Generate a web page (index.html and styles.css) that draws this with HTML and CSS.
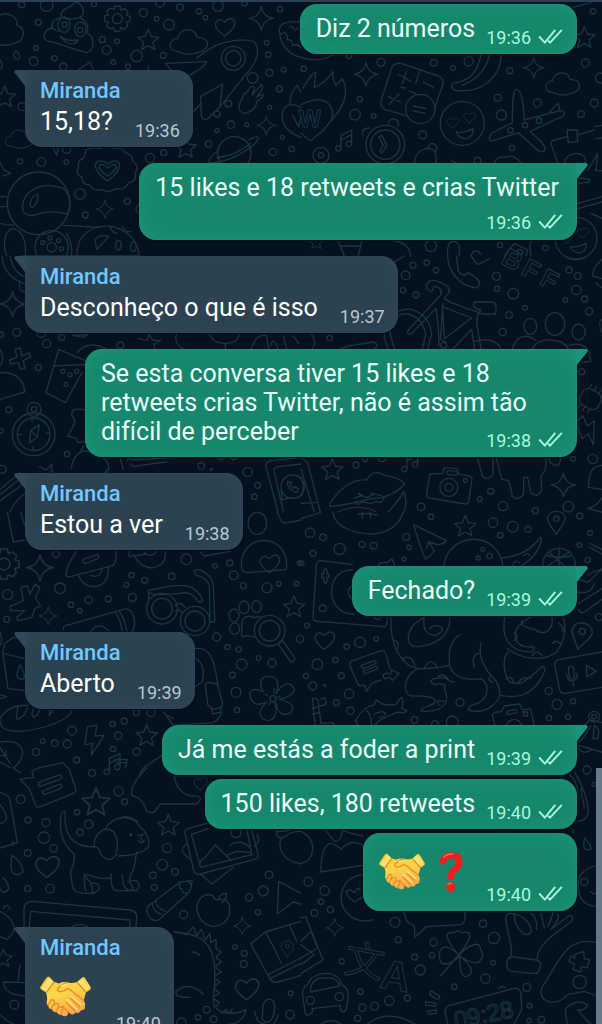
FILE: index.html
```html
<!DOCTYPE html>
<html lang="pt">
<head>
<meta charset="utf-8">
<meta name="viewport" content="width=device-width, initial-scale=1">
<title>Conversa</title>
<link rel="stylesheet" href="styles.css">
</head>
<body>
<svg class="wallpaper" viewBox="0 0 1806 3072" preserveAspectRatio="xMinYMin slice" aria-hidden="true">
  <defs>
    <path id="star" d="M0-32 9-10 32-7 14 8 20 30 0 18-20 30-14 8-32-7-9-10Z"/>
    <path id="spark" d="M0-36Q4-5 36 0Q5 5 0 36Q-5 5-36 0Q-5-5 0-36Z"/>
    <path id="heart" d="M-2 28Q-34 5-29-10Q-22-30-2-14Q16-34 28-16Q34 2-2 28Z"/>
    <path id="cloud" d="M-34 30C-70 28-56-10-34-8C-25-45 22-42 25-12C65-14 64 25 36 30Q0 48-34 30Z"/>
    <path id="note" d="M-18 22V-18L14-34V8M-18-4 14-20M-18 22a8 8 0 1 1-2-6M14 8a8 8 0 1 1-2-6"/>
    <path id="pin" d="M0 34C-14 8-30-2-26-18C-20-42 20-42 26-18C29-2 12 10 0 34ZM8-14a8 8 0 1 1-16 0a8 8 0 1 1 16 0"/>
    <path id="bolt" d="M-20-42 8-46 4-14 30-16-8 44-4 8-28 12Z"/>
    <g id="gear"><path d="M-8-38H8L11-26 22-30 32-20 27-10 38-7V8L27 11 31 22 21 32 10 27 7 38H-8L-11 27-22 31-32 21-27 10-38 7V-8L-27-11-31-22-21-32-10-27Z"/><circle r="15"/></g>
    <g id="love"><circle r="66"/><use href="#heart" transform="translate(-28 -2) scale(.6)"/><use href="#heart" transform="translate(22 -18) scale(.6)"/><path d="M-18 26Q8 30 32 16Q34 44 8 46Q-12 44-18 26Z"/></g>
    <g id="camera"><path d="M-60-32-22-36-18-54H22L26-38 62-34Q68-32 67-22L62 42Q60 52 48 50L-56 40Q-66 38-65 28Z"/><circle r="27" cy="4"/><circle r="12" cy="4"/><rect x="-10" y="-46" width="32" height="12" rx="5"/><circle cx="48" cy="-20" r="6"/></g>
  </defs>

  <g>
    <path d="M0 45C30 35 55 55 50 75C80 85 72 120 50 128Q25 138 0 135M0 180Q12 195 2 208"/>
    <path d="M185 52C175 25 215 25 228 4C255 20 255 42 240 52Q270 70 262 98C290 120 280 150 262 158C220 150 180 130 150 125C120 120 130 90 156 84Q150 60 185 52ZM185 52Q210 62 240 52M156 84Q168 92 178 94M180 108Q200 126 234 120Q225 140 196 126Z"/>
    <ellipse cx="192" cy="74" rx="18" ry="23"/><ellipse cx="241" cy="88" rx="17" ry="22"/><circle cx="194" cy="74" r="8"/><circle cx="240" cy="90" r="8"/>
    <use href="#gear" x="352" y="56"/><use href="#star" x="445" y="119"/>
    <use href="#cloud" x="566" y="124"/><use href="#heart" x="676" y="80"/><use href="#spark" x="784" y="55"/>
    <path d="M496 190 620 185Q612 205 540 240M496 190 515 212M590 175C640 130 710 110 760 124C785 145 770 190 740 220L660 320M602 290 668 252 660 320 624 356Q606 364 604 344ZM580 335 604 310"/>
    <circle cx="700" cy="175" r="36"/><circle cx="700" cy="175" r="23"/>
    <path d="M903 66C860 62 836 70 838 95C842 140 870 165 903 172M838 95Q846 110 852 96Q864 102 862 120Q878 116 878 136Q894 130 903 144M870 78 882 86M886 92 894 82"/>
    <path d="M48 152Q64 168 58 176Q44 180 40 164ZM232 212 270 186 282 212M445 200V212"/>
    <path d="M738 340Q710 336 720 308C735 290 725 280 742 276Q754 250 764 264L756 286 784 254Q796 262 768 292L788 282Q796 290 770 304Q770 328 738 340Z"/>
    <use href="#spark" transform="translate(799 376) scale(.8)"/><use href="#star" x="14" y="290"/>
    <path d="M903 322C870 305 848 315 846 350C848 380 870 400 903 412M878 346 896 380 903 350M870 310Q868 280 892 256L903 276"/>
    <use href="#cloud" transform="translate(58 416) scale(.75)"/><path d="M158 440 170 466 176 440"/>
    <circle cx="703" cy="460" r="50"/><path d="M655 452C620 478 620 492 638 488Q690 486 755 440C785 412 778 402 745 420M650 474Q710 466 752 430"/>
    <use href="#star" x="557" y="442"/>
    <path d="M258 450Q280 440 300 446Q320 432 342 446Q366 440 376 458Q400 464 398 484Q420 500 406 518Q412 545 386 548Q375 572 348 566Q325 582 306 568Q280 576 270 555Q245 554 246 532Q222 520 236 502Q230 480 252 474ZM323 543C260 500 290 465 323 492C358 465 380 500 323 543ZM323 528C278 500 302 480 323 504C346 480 366 500 323 528Z"/>
    <circle cx="116" cy="610" r="94"/><path d="M190 565Q130 545 90 575Q60 600 70 635Q85 655 120 640Q155 630 202 642Q222 600 190 565ZM112 582C92 590 84 620 96 622C110 618 118 590 112 582Z"/>
    <path d="M0 486 12 510 32 520 6 528M0 590H20M0 620H24M36 685C8 700 10 740 20 768M36 685Q80 690 76 768M40 675Q20 676 0 670M190 676 300 682M60 768H420M200 700Q220 740 214 768"/>
    <circle cx="155" cy="742" r="50"/><circle cx="155" cy="742" r="14"/><circle cx="128" cy="728" r="6"/><circle cx="150" cy="714" r="6"/><circle cx="176" cy="722" r="6"/><circle cx="184" cy="746" r="6"/>
    <use href="#spark" transform="translate(315 628) scale(.75)"/>
    <path d="M230 768C230 700 280 672 340 680Q410 700 418 768M285 720Q300 700 326 710L290 748ZM330 680Q335 700 352 700M366 680Q380 700 392 694"/><ellipse cx="355" cy="736" rx="8" ry="14"/><ellipse cx="400" cy="740" rx="8" ry="14"/>
    <circle cx="65" cy="14" r="9"/><circle cx="140" cy="15" r="19"/><circle cx="282" cy="12" r="8"/><circle cx="115" cy="67" r="9"/><circle cx="108" cy="144" r="7"/><circle cx="101" cy="184" r="13"/><circle cx="163" cy="175" r="8"/><circle cx="190" cy="200" r="11"/><circle cx="307" cy="119" r="9"/><circle cx="351" cy="124" r="7"/><circle cx="320" cy="150" r="13"/><circle cx="340" cy="187" r="7"/><circle cx="430" cy="38" r="12"/><circle cx="480" cy="8" r="13"/><circle cx="470" cy="56" r="7"/><circle cx="507" cy="74" r="16"/><circle cx="540" cy="22" r="10"/><circle cx="597" cy="34" r="8"/><circle cx="616" cy="53" r="7"/><circle cx="654" cy="18" r="16"/><circle cx="734" cy="10" r="8"/><circle cx="840" cy="28" r="8"/><circle cx="410" cy="168" r="17"/><circle cx="490" cy="166" r="9"/><circle cx="384" cy="200" r="8"/><circle cx="800" cy="128" r="7"/><circle cx="805" cy="164" r="8"/><circle cx="758" cy="234" r="16"/><circle cx="808" cy="218" r="10"/><circle cx="851" cy="209" r="7"/><circle cx="838" cy="267" r="9"/><circle cx="685" cy="311" r="10"/><circle cx="651" cy="342" r="9"/><circle cx="693" cy="374" r="11"/><circle cx="740" cy="374" r="6"/><circle cx="809" cy="322" r="6"/><circle cx="651" cy="392" r="6"/><circle cx="626" cy="432" r="10"/><circle cx="847" cy="412" r="6"/><circle cx="819" cy="456" r="11"/><circle cx="875" cy="447" r="8"/><circle cx="450" cy="474" r="14"/><circle cx="491" cy="458" r="9"/><circle cx="200" cy="448" r="12"/><circle cx="124" cy="486" r="13"/><circle cx="60" cy="484" r="8"/><circle cx="199" cy="486" r="7"/><circle cx="240" cy="582" r="16"/><circle cx="382" cy="604" r="9"/><circle cx="420" cy="627" r="12"/><circle cx="256" cy="645" r="9"/><circle cx="66" cy="320" r="12"/><circle cx="432" cy="546" r="8"/><circle cx="434" cy="684" r="10"/>
  </g>

  <g transform="translate(903 0)">
    <path d="M0 172Q50 190 95 165M815 22 870 8"/>
    <use href="#spark" x="195" y="223"/><use href="#star" x="850" y="112"/><use href="#spark" transform="translate(698 203) scale(.85)"/>
    <path d="M6 265C20 235 42 215 44 216L40 262Q70 252 96 214Q94 238 104 256L124 236C145 275 130 320 92 360L66 392 28 422 0 400M0 314C40 295 80 290 94 330Q96 345 92 360"/>
    <text x="-6" y="382" font-size="70" font-weight="700">W</text>
    <path d="M274 198Q284 188 300 190L412 228Q430 236 426 252L400 326M274 198 240 302Q236 320 252 328L312 346M290 222 330 244M316 214 304 252M366 246 398 262M356 212 344 250M262 290 298 306M294 282 264 314M300 262 312 264M328 274 344 280"/><circle cx="358" cy="327" r="44"/><path d="M338 318 376 326M336 332 372 340"/>
    <path d="M540 164C530 220 500 246 456 250Q446 262 460 270C540 285 600 230 600 164M566 164Q550 230 484 256"/>
    <use href="#cloud" transform="translate(785 250) scale(.9)"/>
    <path d="M670 360C668 300 660 270 646 268C636 270 634 300 634 368L572 400Q560 415 570 424L652 398 700 442Q722 464 732 450C736 430 700 410 688 394L786 348Q796 334 778 332L670 360M744 338 770 310Q778 318 772 332"/><circle cx="628" cy="391" r="8"/><circle cx="672" cy="376" r="8"/><circle cx="714" cy="362" r="8"/>
    <use href="#love" x="484" y="370"/><use href="#note" x="138" y="424"/>
    <circle cx="253" cy="434" r="58"/><circle cx="253" cy="434" r="44"/><path d="M234 410 242 406 258 436 242 460 236 454 246 436ZM186 408Q178 384 206 384M262 372Q262 354 282 358Q298 366 290 380"/>
    <path d="M340 490Q340 465 362 450C400 435 410 460 404 490M378 446 390 430Q404 430 408 442L402 460"/>
    <circle cx="60" cy="466" r="24"/><circle cx="60" cy="466" r="8"/>
    <path d="M770 488 750 432Q750 422 760 420L798 410M832 404 880 390M798 390H828L830 424 802 428ZM880 380 903 376M884 416 903 414M580 490Q586 468 610 472Q640 460 660 490M834 534 866 538V546L834 550M830 610 903 590M830 626 903 606M790 490Q796 460 830 460Q860 468 852 490M862 510 890 460 884 512H903"/>
    <path d="M450 480 468 490"/><use href="#love" transform="translate(825 715) scale(.95)"/>
    <path d="M690 768Q680 720 700 718M870 640 903 655M112 724 130 768M182 724 172 768M118 738H180M270 720Q330 730 328 768M440 768Q436 720 462 724Q480 730 474 768M510 768Q520 740 540 762M610 768 640 730 680 750 676 768"/><use href="#star" transform="translate(46 725) scale(.7)"/>
    <circle cx="240" cy="187" r="12"/><circle cx="144" cy="168" r="8"/><circle cx="8" cy="206" r="8"/><circle cx="398" cy="188" r="10"/><circle cx="456" cy="204" r="7"/><circle cx="503" cy="184" r="14"/><circle cx="626" cy="212" r="9"/><circle cx="176" cy="298" r="8"/><circle cx="162" cy="344" r="16"/><circle cx="218" cy="348" r="7"/><circle cx="365" cy="405" r="12"/><circle cx="590" cy="293" r="10"/><circle cx="601" cy="345" r="15"/><circle cx="709" cy="309" r="12"/><circle cx="853" cy="189" r="12"/><circle cx="898" cy="234" r="15"/><circle cx="880" cy="309" r="12"/><circle cx="840" cy="342" r="10"/><circle cx="633" cy="444" r="8"/><circle cx="530" cy="482" r="10"/><circle cx="876" cy="34" r="8"/><circle cx="390" cy="738" r="17"/><circle cx="597" cy="735" r="8"/><circle cx="733" cy="744" r="8"/><circle cx="657" cy="756" r="8"/>
  </g>

  <g transform="translate(0 768)">
    <path d="M6 0Q10 60 74 84M30 0Q40 50 74 62M60 74Q52 110 80 108"/><use href="#spark" transform="translate(38 144) scale(1.05)"/>
    <path d="M46 280 60 276 66 300 88 290 92 302 70 314 74 338 62 340 56 320 32 324 28 312 50 304ZM176 280 138 410 196 440 246 350M176 280 256 314M162 330 256 326M232 290Q262 250 320 280M0 350C50 345 74 380 74 408L0 430M0 280Q16 310 0 330"/>
    <circle cx="189" cy="346" r="6"/><circle cx="210" cy="356" r="6"/><circle cx="230" cy="346" r="6"/><circle cx="198" cy="385" r="6"/>
    <circle cx="101" cy="535" r="64"/><circle cx="101" cy="535" r="49"/><circle cx="102" cy="460" r="21"/><circle cx="102" cy="460" r="8"/><path d="M92 524 118 506 112 542 88 562ZM92 524 112 542M96 488V498M100 570V582M54 536H64M138 532 148 530"/>
    <path d="M256 462Q210 452 216 478L226 498 204 540 230 548 234 560 258 556M214 636C220 600 240 580 262 586M262 586Q330 600 326 640Q310 650 320 650M240 592 250 570M360 604 370 640M392 612 530 604M392 624Q396 636 420 628L500 618M388 604 382 615"/>
    <path d="M530 232Q520 264 550 278M600 232Q640 230 720 232M626 232Q640 264 676 262Q710 264 718 236M676 262V278M754 278Q770 230 800 240L806 278M812 268Q820 238 834 278M850 240 860 278M880 240 896 262M416 248 442 254 446 236 458 252 482 254 462 264 464 278"/>
    <path d="M118 632 138 642 156 624 154 642 160 650M650 604 664 612 682 600 700 612 714 604"/>
    <path d="M0 700 60 650M0 716 66 664M0 734 70 684M30 768Q50 726 74 714"/>
    <path d="M800 640Q790 620 812 614L903 604M800 640 834 768M824 652Q816 636 834 632L903 624M824 652 850 768"/><circle cx="878" cy="692" r="35"/><path d="M844 702 846 732 870 724M862 676Q860 700 890 710L896 698 884 692 880 698 870 686 876 680Z"/>
    <circle cx="50" cy="229" r="12"/><circle cx="2" cy="236" r="8"/><circle cx="140" cy="263" r="12"/><circle cx="185" cy="244" r="9"/><circle cx="124" cy="230" r="14"/><circle cx="115" cy="335" r="9"/><circle cx="361" cy="268" r="10"/><circle cx="26" cy="461" r="9"/><circle cx="2" cy="524" r="7"/><circle cx="201" cy="594" r="8"/><circle cx="6" cy="640" r="12"/><circle cx="604" cy="630" r="10"/><circle cx="634" cy="640" r="3"/><circle cx="743" cy="648" r="14"/><circle cx="773" cy="688" r="9"/><circle cx="763" cy="722" r="8"/><path d="M218 238 262 236 250 244Z"/>
  </g>

  <g transform="translate(903 768)">
    <path d="M440 0C440 50 480 90 524 96Q546 84 526 66L502 50Q490 66 472 46L466 0M510 0 530 26 566 8M275 20 310 0"/>
    <g transform="rotate(28 620 20)"><text x="600" y="32" font-size="78" font-weight="700">B</text><text x="668" y="32" font-size="78" font-weight="700">F</text><text x="730" y="32" font-size="78" font-weight="700">F</text></g>
    <path d="M790 0Q820 20 850 4M903 10Q870 40 876 60L903 68M886 80Q890 90 903 94"/>
    <path d="M330 160C280 155 245 200 250 248L262 278M320 174C285 170 265 200 268 236L280 278M330 160Q385 175 392 235L380 278M320 174Q366 184 374 236L364 278M376 90Q382 66 410 76C430 86 450 90 444 110L430 128 450 140 540 172M376 90Q380 110 394 104Q396 86 412 94Q426 104 418 118L322 222Q316 234 328 236L404 158Q412 190 414 270M426 142 418 250 436 260M424 152 512 186 430 248ZM532 172 552 174 584 174Q590 138 572 138L520 138Q510 156 540 162L532 172Q524 190 530 220L540 278M456 278 512 220 520 278M520 256Q580 240 600 278"/><circle cx="428" cy="268" r="9"/>
    <ellipse cx="688" cy="211" rx="19" ry="24"/><ellipse cx="762" cy="204" rx="29" ry="34"/><ellipse cx="833" cy="228" rx="20" ry="24"/><path d="M634 278Q650 230 690 244L706 254M694 278Q710 250 750 252Q790 254 802 278M804 268Q850 256 866 290L868 316 846 318"/>
    <path d="M30 232Q50 260 34 278M120 278 140 270 220 258Q236 270 220 278M903 190Q890 200 903 230"/>
    <g transform="rotate(30 868 428)"><rect x="838" y="402" width="62" height="54" rx="20"/><path d="M850 402V390M866 402V388M882 402V390M850 456V468M866 456V470M882 456V468"/></g>
    <use href="#bolt" transform="translate(862 524) rotate(-30)"/>
    <use href="#star" x="94" y="640"/><use href="#note" x="336" y="618"/><use href="#camera" transform="translate(444 690) rotate(4)"/>
    <path d="M0 604 20 620 58 768M0 640 40 768M0 664Q14 690 0 720M0 742 44 740"/>
    <path d="M86 744C120 690 160 670 196 672Q220 636 250 658Q300 665 310 684C290 710 250 728 208 728Q150 745 86 752ZM160 726 180 720 172 712 190 722 200 724 220 714 212 712 240 718M162 736 170 746 186 738 210 742 226 736 240 740 250 724M110 768Q160 745 210 760L226 768M260 768Q290 740 308 706Q320 730 310 768"/>
    <path d="M530 606 544 660Q560 676 576 656V606M586 606 602 670 624 674 634 720Q650 738 668 714V664L680 664 690 710Q710 728 722 702L720 658Q740 640 734 606"/><path d="M744 606Q744 628 770 628Q780 620 778 604"/>
    <use href="#spark" x="787" y="687"/><path d="M903 628C870 630 864 650 862 694L903 700M903 724Q890 750 860 758L903 768"/><circle cx="875" cy="609" r="14"/>
    <circle cx="336" cy="28" r="9"/><circle cx="377" cy="20" r="8"/><circle cx="314" cy="58" r="13"/><circle cx="405" cy="43" r="8"/><circle cx="306" cy="103" r="8"/><circle cx="345" cy="117" r="9"/><circle cx="586" cy="61" r="12"/><circle cx="588" cy="98" r="8"/><circle cx="637" cy="113" r="16"/><circle cx="672" cy="155" r="7"/><circle cx="624" cy="177" r="10"/><circle cx="605" cy="228" r="11"/><circle cx="804" cy="42" r="9"/><circle cx="830" cy="60" r="10"/><circle cx="826" cy="102" r="14"/><circle cx="793" cy="132" r="7"/><circle cx="851" cy="129" r="9"/><circle cx="864" cy="166" r="11"/><circle cx="86" cy="246" r="8"/><circle cx="842" cy="347" r="9"/><circle cx="165" cy="627" r="9"/><circle cx="192" cy="608" r="8"/><circle cx="243" cy="606" r="11"/><circle cx="816" cy="608" r="7"/><circle cx="569" cy="706" r="9"/><circle cx="536" cy="729" r="7"/><circle cx="606" cy="750" r="14"/><circle cx="360" cy="752" r="11"/><circle cx="802" cy="752" r="16"/><circle cx="703" cy="764" r="9"/>
  </g>

  <g transform="translate(0 1536)">
    <path d="M22 0 40 90 74 84M62 0 74 40"/><use href="#gear" transform="translate(12 156) scale(1.2)"/><use href="#spark" transform="translate(120 167) scale(1.1)"/>
    <path d="M62 226 82 222 90 246 104 218 120 226 106 258 122 282 104 290 96 316 54 326 50 316 74 296 32 296 30 284 70 266Z"/><use href="#spark" transform="translate(145 312) scale(.75)"/>
    <path d="M228 118Q200 160 198 190Q200 196 212 194L340 160Q352 140 348 118M250 142 292 128Q300 132 294 140L258 154Q248 152 250 142ZM236 192Q250 225 285 224Q325 220 325 166M270 190Q300 200 306 172M386 118 388 134 440 126M400 128Q420 166 456 168Q500 160 496 118M432 118Q450 142 470 118M600 118 612 132 690 118"/>
    <path d="M190 354Q188 342 200 340L370 292Q396 286 402 320Q408 345 396 358M346 302Q362 320 366 356M358 298Q374 320 380 356M272 358Q296 326 326 356M0 360 6 384 0 400M12 396 40 376 74 380M14 400 8 420 24 530 74 536M10 424 74 440M60 458Q78 490 72 500Q52 506 50 488Z"/>
    <circle cx="486" cy="290" r="46"/><circle cx="486" cy="290" r="31"/><circle cx="585" cy="327" r="44"/><circle cx="585" cy="327" r="30"/><path d="M526 280Q540 266 556 286M526 298Q538 286 546 302M446 242Q440 232 452 234Q530 215 570 224Q600 240 608 266Q600 276 590 262Q570 236 540 244L466 248ZM446 242V262M590 190Q576 176 590 172Q632 180 640 220L644 330 630 330 628 220Q620 196 590 190"/>
    <ellipse cx="772" cy="34" rx="28" ry="33"/><path d="M724 160C724 60 860 60 860 160Q862 176 846 174L742 182Q724 180 724 160Z"/><use href="#heart" x="810" y="154"/><path d="M830 0 844 26Q850 36 864 32L903 24"/>
    <path d="M740 370Q720 384 726 350C722 320 736 306 760 316L782 314M740 370 768 376"/><ellipse cx="702" cy="310" rx="15" ry="19"/><ellipse cx="732" cy="286" rx="15" ry="19"/><ellipse cx="770" cy="284" rx="14" ry="18"/><ellipse cx="704" cy="350" rx="15" ry="17"/><circle cx="809" cy="356" r="46"/><circle cx="809" cy="356" r="31"/><path d="M836 398 846 384 882 434Q886 450 872 450Z"/>
    <use href="#star" x="882" y="284"/>
    <path d="M586 410C640 400 645 470 654 520M586 438Q620 460 606 510L586 524M616 522Q614 510 630 512L652 516 668 576Q664 590 640 592L624 580ZM634 590 638 606 662 600 664 588M490 600 520 640 640 632Q660 620 664 600"/>
    <path d="M790 540C770 500 790 490 816 494C840 500 834 530 828 546C850 506 874 512 882 530C886 550 850 560 838 562C880 570 886 590 870 604C840 616 832 590 826 578C834 620 810 630 796 624C770 610 780 590 800 570C760 590 748 560 750 540Q760 525 790 540Z"/><circle cx="819" cy="560" r="9"/><path d="M794 546 804 552M822 528V544M840 554 832 556M806 578 812 570M832 580 824 572"/>
    <path d="M0 618Q30 576 86 580M54 584Q46 620 52 622Q80 610 82 586M100 590Q92 614 102 616Q118 604 118 594M0 620Q-4 660 60 658C140 652 210 620 216 596M150 592 148 610 160 594"/>
    <use href="#bolt" x="282" y="686"/><use href="#star" x="440" y="670"/><path d="M0 690Q60 680 68 720Q66 750 40 768M0 706 30 754M0 730 18 732V716M0 750 30 766M116 768 190 752 204 768M344 744 382 742 376 768M430 768 495 724M0 548 20 554 0 560M520 620 500 610M350 752H376"/>
    <circle cx="168" cy="125" r="10"/><circle cx="559" cy="142" r="16"/><circle cx="23" cy="248" r="15"/><circle cx="20" cy="322" r="9"/><circle cx="180" cy="229" r="16"/><circle cx="213" cy="278" r="8"/><circle cx="239" cy="296" r="7"/><circle cx="266" cy="264" r="11"/><circle cx="325" cy="261" r="9"/><circle cx="394" cy="189" r="8"/><circle cx="379" cy="218" r="7"/><circle cx="434" cy="205" r="9"/><circle cx="397" cy="256" r="12"/><circle cx="515" cy="193" r="10"/><circle cx="645" cy="162" r="7"/><circle cx="689" cy="153" r="9"/><circle cx="701" cy="190" r="13"/><circle cx="730" cy="221" r="9"/><circle cx="801" cy="227" r="15"/><circle cx="836" cy="215" r="7"/><circle cx="889" cy="215" r="7"/><circle cx="899" cy="153" r="7"/><circle cx="650" cy="375" r="12"/><circle cx="682" cy="405" r="8"/><circle cx="716" cy="412" r="8"/><circle cx="725" cy="457" r="16"/><circle cx="776" cy="438" r="7"/><circle cx="816" cy="453" r="12"/><circle cx="697" cy="489" r="9"/><circle cx="708" cy="541" r="15"/><circle cx="711" cy="594" r="8"/><circle cx="900" cy="381" r="11"/><circle cx="216" cy="656" r="13"/><circle cx="128" cy="687" r="7"/><circle cx="164" cy="694" r="10"/><circle cx="202" cy="696" r="12"/><circle cx="108" cy="720" r="11"/><circle cx="230" cy="744" r="9"/><circle cx="338" cy="636" r="8"/><circle cx="373" cy="627" r="9"/><circle cx="355" cy="671" r="11"/><circle cx="339" cy="711" r="8"/><circle cx="410" cy="719" r="11"/><circle cx="409" cy="602" r="9"/><circle cx="453" cy="602" r="12"/>
  </g>

  <g transform="translate(903 1536)">
    <path d="M96 0C100 50 170 66 220 66C270 60 300 30 306 0M184 0V18M206 0 210 18M170 8Q196 0 230 10M0 20 40 8 60 0"/>
    <path d="M338 38 436 86Q430 96 410 98L382 90 400 116Q390 130 374 142Q362 120 338 38ZM382 90 376 110"/><use href="#star" x="493" y="42"/><use href="#pin" x="766" y="34"/>
    <path d="M428 162C440 60 590 50 606 162M604 138Q680 130 716 78Q722 74 720 90C710 130 680 150 660 162M636 160Q640 140 656 152M668 130Q684 120 686 132"/><circle cx="545" cy="112" r="6"/><circle cx="532" cy="138" r="6"/><circle cx="566" cy="132" r="8"/>
    <circle cx="774" cy="158" r="49"/><path d="M736 130Q770 140 810 132M774 108V162M740 162 808 118M744 120 790 162"/>
    <path d="M866 94 903 112M866 106 903 126M830 200 860 212 903 170M832 292Q840 306 850 300L903 262M830 276 903 230M860 190Q890 170 903 176M830 240Q870 250 880 214"/>
    <path d="M154 158 60 146Q48 146 46 160L36 314Q36 328 50 328L250 344Q262 340 258 312M154 174C70 170 70 310 160 306M154 220Q130 240 154 262M68 174Q72 166 78 174V186H84V196H78V208Q72 220 68 208V196H62V186H68ZM232 160 238 152 258 152 272 140 278 152 280 162"/><circle cx="65" cy="289" r="10"/><circle cx="230" cy="312" r="10"/>
    <use href="#heart" x="72" y="384"/>
    <path d="M270 312C265 400 300 460 350 470Q400 470 446 460C440 420 450 380 480 366M540 394C530 430 545 460 570 490Q600 520 596 550M370 316Q320 340 322 385C330 420 400 400 430 370Q450 340 446 312M370 312Q360 370 404 370Q430 360 422 346Q400 334 386 350M274 382Q296 386 290 410M306 440Q330 424 342 462M370 468Q390 430 410 468M446 460Q460 510 540 500C570 520 560 560 530 574Q500 580 502 594C560 610 590 570 596 550M350 470C310 490 300 540 330 552Q380 550 400 560Q410 575 380 582Q350 596 366 598C440 600 445 560 430 530Q440 510 400 518Q380 506 400 500L430 496Q450 512 460 510M414 580Q400 560 430 568M570 490Q555 505 575 510M520 466Q510 430 532 424M410 494Q430 480 444 506"/>
    <path d="M612 312C600 370 620 420 690 420Q710 405 690 404C640 410 630 360 656 340Q700 300 712 316M620 410C660 440 720 450 760 425C790 400 800 340 784 312M664 326Q650 340 700 352C740 380 760 340 752 314M772 334Q788 340 786 358M755 394Q764 380 780 398M694 432Q700 410 724 430M640 362Q660 376 638 386M622 420C600 440 610 500 630 512Q660 520 680 500L724 464Q740 466 720 500C690 550 650 560 600 550M616 502Q624 486 640 510M650 512Q670 490 690 500"/>
    <path d="M148 464Q142 448 156 446L240 416Q252 416 256 430L266 468M148 464 172 520 190 520 196 538 212 514 240 504M180 460 220 446Q230 448 222 456L186 470ZM186 478 226 462Q236 466 226 472L190 486ZM246 490Q250 480 268 486L272 474 294 484 274 506 268 496 250 500Z"/>
    <use href="#pin" transform="translate(840 374) rotate(14) scale(1.15)"/>
    <path d="M903 420 776 442Q758 446 762 464L776 534Q780 546 794 544L903 526M856 460 886 478 858 494ZM802 470Q806 456 818 468L820 496Q810 506 804 494ZM796 486Q800 510 816 506Q832 500 828 484M816 508 818 522"/>
    <path d="M164 624Q190 580 218 580L226 564 244 576C260 580 270 580 284 578L300 556Q310 560 302 590L318 596Q310 606 290 600L240 622 220 640M164 624 170 640M196 596Q210 604 212 640M220 606Q240 596 254 602Q250 616 232 616M34 560Q52 556 52 574L60 634 96 632 100 640M34 560 42 636M34 590 52 584M34 606 56 602M60 562Q76 550 74 578L56 582"/>
    <path d="M582 640 574 610Q576 598 600 600L610 582 656 576 664 594 688 590 700 640M614 640Q640 604 664 640M618 598 646 592 648 602 620 608ZM666 600H680V612H668ZM850 640 866 624 903 632M832 690Q850 680 870 640M880 640Q900 650 890 680H876ZM832 708Q850 730 870 714M832 700 903 720"/><circle cx="879" cy="614" r="16"/><circle cx="879" cy="614" r="7"/>
    <circle cx="27" cy="62" r="14"/><circle cx="66" cy="76" r="10"/><circle cx="116" cy="111" r="17"/><circle cx="183" cy="97" r="9"/><circle cx="218" cy="101" r="10"/><circle cx="36" cy="124" r="9"/><circle cx="2" cy="154" r="7"/><circle cx="316" cy="75" r="10"/><circle cx="324" cy="106" r="7"/><circle cx="309" cy="141" r="6"/><circle cx="390" cy="14" r="8"/><circle cx="576" cy="32" r="14"/><circle cx="598" cy="70" r="8"/><circle cx="635" cy="44" r="16"/><circle cx="681" cy="52" r="9"/><circle cx="836" cy="12" r="9"/><circle cx="867" cy="63" r="7"/><circle cx="835" cy="99" r="7"/><circle cx="860" cy="144" r="8"/><circle cx="18" cy="341" r="7"/><circle cx="177" cy="391" r="16"/><circle cx="226" cy="380" r="7"/><circle cx="137" cy="404" r="8"/><circle cx="49" cy="457" r="16"/><circle cx="103" cy="444" r="8"/><circle cx="121" cy="491" r="9"/><circle cx="15" cy="492" r="8"/><circle cx="35" cy="522" r="12"/><circle cx="71" cy="520" r="3"/><circle cx="144" cy="545" r="14"/><circle cx="106" cy="572" r="9"/><circle cx="148" cy="596" r="11"/><circle cx="477" cy="571" r="12"/><circle cx="341" cy="624" r="10"/><circle cx="402" cy="636" r="10"/><circle cx="454" cy="630" r="18"/><circle cx="743" cy="537" r="11"/><circle cx="768" cy="577" r="15"/><circle cx="816" cy="568" r="8"/><circle cx="744" cy="618" r="8"/><circle cx="801" cy="615" r="8"/><circle cx="894" cy="315" r="11"/>
  </g>

  <g transform="translate(0 2304)">
    <path d="M0 74Q28 80 30 96L52 224 0 240M0 110Q24 140 18 156Q10 168 0 164M38 220 40 232M40 0 62 14M60 34 100 28 96 8 116 0M60 34 88 62 106 112Q112 120 122 116L220 76Q232 70 226 58L206 0M114 44 180 20Q190 26 180 34L118 56ZM126 70 180 48Q190 54 182 62L132 80Z"/>
    <use href="#note" x="346" y="-10"/><use href="#star" transform="translate(288 101) scale(1.3)"/><use href="#star" x="505" y="171"/><use href="#heart" transform="translate(602 46) scale(.7)"/>
    <path d="M440 0C400 40 390 70 396 82Q430 90 440 130Q460 140 470 124L480 108H590Q620 80 570 84Q530 70 524 30V20M430 0 418 22"/>
    <path d="M284 236C210 240 190 190 196 130Q184 126 182 150C176 210 200 240 222 258Q226 280 212 310C216 370 220 376 262 376Q290 380 298 360Q298 344 276 346L262 334 254 318Q250 350 258 370M262 320Q300 335 334 330M334 318Q330 370 354 368L410 368Q426 350 408 338L390 338 390 326 402 300 410 252M366 320 370 350Q380 370 392 366M384 340Q400 350 398 366M272 348Q280 360 276 374M308 186Q276 210 284 236Q300 240 300 256Q330 290 348 260Q360 220 340 190Q324 180 308 186ZM316 182C340 140 400 140 420 176Q450 200 446 232C440 254 390 264 354 264M360 150Q380 138 412 160M414 202 432 200M424 206V216M414 218Q424 230 434 216"/><circle cx="392" cy="200" r="3"/>
    <path d="M36 262Q72 290 68 312Q50 328 36 312Q30 290 36 262ZM8 328Q26 346 26 362Q20 374 6 372L0 360"/><use href="#heart" transform="translate(143 295) scale(1.2)"/>
    <path d="M620 166 564 182Q550 188 556 200L582 310Q588 322 602 318L764 274Q778 270 774 258L754 182M624 182 574 200 602 298 756 260 740 182M598 292 604 276Q610 270 616 268L646 230 694 278M680 262 710 250 754 254M690 232Q720 210 752 240M560 228Q544 240 548 252L568 274M604 320 636 348 700 298M770 200Q786 216 764 234"/><circle cx="708" cy="194" r="15"/>
    <path d="M830 182Q826 210 844 210C830 240 850 280 903 288M844 210 862 202Q870 190 903 190M830 192 870 186"/>
    <path d="M440 430Q440 412 456 406L540 342 576 338Q578 350 566 374L480 452Q466 464 450 450ZM540 342Q534 364 546 362Q544 380 566 374M456 406Q460 432 486 440M466 398Q472 422 496 430M562 338 574 350"/>
    <path d="M640 384C610 370 584 400 592 430C600 470 640 480 652 472C680 470 694 440 688 410C680 390 660 392 650 396Q640 392 640 384ZM654 396Q660 376 678 376Q684 394 664 404"/>
    <path d="M72 476V420Q76 400 96 400L390 426Q412 430 410 450L408 476M88 476 92 430 390 456 390 476M216 476Q240 462 262 476M0 430Q40 450 42 480Q40 500 22 514L0 506M10 422A10 10 0 1 1 30 424M0 740Q20 760 40 768M60 590 54 640M74 644 10 642Q12 680 74 684"/>
    <use href="#star" transform="translate(10 570) scale(.85)"/>
    <path d="M522 490 560 500 580 476 590 504 604 484 616 516 630 496 632 524 648 514 648 540M522 492C620 500 660 530 640 690Q640 720 650 722M646 540 664 552 648 566M648 568 664 582 648 594M648 598 664 612 644 624M644 630 660 642 642 656M642 660 658 676 640 686M640 692 658 704 650 716M650 722C670 740 710 740 738 724C736 750 710 768 690 768M656 726 668 736 676 724 690 736 698 720M576 552Q590 552 598 562M526 672C560 640 590 660 610 678M530 670Q520 690 570 688"/>
    <use href="#spark" transform="translate(727 474) scale(.75)"/><path d="M836 340 903 376M836 340 832 438 880 402 903 408"/>
    <path d="M752 528 796 492 868 470 903 460M752 528 812 636Q820 646 834 642L903 622M796 492 822 540 844 586M868 470 890 520M804 620 903 570M810 632 903 586"/><use href="#pin" transform="translate(862 544) scale(.7)"/>
    <use href="#heart" transform="translate(742 662) scale(1.2)"/><path d="M790 708Q800 686 820 698Q830 730 814 756Q796 770 786 752ZM764 730Q770 768 796 768M834 740Q830 760 820 768"/>
    <circle cx="276" cy="15" r="10"/><circle cx="62" cy="94" r="13"/><circle cx="356" cy="70" r="14"/><circle cx="374" cy="101" r="9"/><circle cx="231" cy="133" r="8"/><circle cx="266" cy="169" r="13"/><circle cx="240" cy="193" r="10"/><circle cx="84" cy="156" r="9"/><circle cx="138" cy="164" r="12"/><circle cx="132" cy="209" r="17"/><circle cx="161" cy="241" r="11"/><circle cx="83" cy="255" r="10"/><circle cx="83" cy="362" r="9"/><circle cx="150" cy="362" r="13"/><circle cx="501" cy="240" r="14"/><circle cx="487" cy="290" r="16"/><circle cx="525" cy="311" r="10"/><circle cx="459" cy="322" r="10"/><circle cx="463" cy="358" r="9"/><circle cx="551" cy="440" r="12"/><circle cx="807" cy="320" r="11"/><circle cx="790" cy="369" r="15"/><circle cx="747" cy="388" r="11"/><circle cx="774" cy="433" r="8"/><circle cx="705" cy="537" r="7"/><circle cx="733" cy="556" r="9"/><circle cx="731" cy="588" r="10"/><circle cx="43" cy="710" r="13"/><circle cx="620" cy="725" r="10"/><circle cx="594" cy="748" r="8"/><circle cx="641" cy="754" r="10"/><circle cx="872" cy="676" r="7"/><circle cx="870" cy="740" r="13"/><circle cx="544" cy="764" r="14"/>
  </g>

  <g transform="translate(903 2304)">
    <path d="M806 20Q830 40 830 74M822 14Q860 80 862 130Q860 158 830 160M840 60 850 120M850 210Q876 236 868 244Q852 250 848 234ZM816 184V196M903 290Q830 300 832 350C830 400 860 420 903 414M868 370Q880 385 890 370"/><circle cx="850" cy="342" r="11"/>
    <path d="M0 190Q40 210 34 250Q30 280 0 286M72 184 100 220Q120 224 124 184M120 184 150 196 186 204M60 312C60 270 66 230 90 226Q110 232 120 244Q140 220 166 224L184 230M60 312 184 292"/>
    <path d="M182 320C120 330 110 390 130 425Q160 470 218 455M178 366Q170 354 160 374Q140 356 136 374Q140 390 162 402L182 388"/>
    <use href="#spark" transform="translate(101 479) scale(.75)"/>
    <text x="132" y="622" font-size="118" transform="rotate(10 190 580)">文</text><text x="240" y="666" font-size="124" font-weight="700" transform="rotate(10 285 620)">A</text>
    <path d="M308 432 318 460 340 474 342 508 376 476 480 470Q494 468 492 432"/>
    <path d="M472 560C430 510 430 490 456 494Q472 484 484 494C516 486 514 510 474 560C510 524 540 520 538 544Q554 560 534 582Q510 590 474 562C520 600 520 620 494 626Q476 626 476 564C440 600 416 590 416 570Q410 554 424 540Q440 530 474 560L418 624"/>
    <path d="M628 572C640 540 616 490 614 450Q618 434 632 436C670 440 690 470 692 490Q680 510 660 490Q640 470 640 440M708 572Q710 540 750 506L812 460Q820 444 806 442L750 484M630 566 706 576Q720 580 718 594L714 608Q710 618 696 616L630 610Q616 604 618 592Q618 566 630 566ZM690 436Q710 450 706 484M720 436 730 480M756 432Q750 460 740 476M770 440Q780 446 750 484"/>
    <path d="M903 530Q850 510 820 530C790 540 760 600 722 660Q714 690 740 700Q770 712 800 680L850 670 903 690M820 560 848 550 850 572 866 576 858 600 842 596 838 612 816 604 820 588 804 580 810 564 822 570Z"/><circle cx="836" cy="642" r="20"/><path d="M800 768Q790 740 796 720Q830 690 860 710Q850 730 830 726Q850 750 870 768"/>
    <path d="M0 450 14 446 66 576 0 616M0 590 40 560 0 530M0 570 50 540 30 490 0 520"/>
    <path d="M14 740 6 690Q0 660 20 650C30 610 110 600 122 650Q144 660 142 686L136 724Q128 738 118 726V712L34 722V732Q24 746 14 740ZM28 668Q30 630 70 630Q110 626 116 654L28 672Z"/><circle cx="28" cy="697" r="12"/><circle cx="115" cy="686" r="12"/>
    <path d="M390 668 416 686Q416 696 404 692L386 680ZM374 700 404 706V714L374 712ZM376 730 406 726V736L380 738M440 768 432 732Q430 716 446 712L636 662Q656 656 660 676L662 724 640 768M594 662Q600 650 612 660"/>
    <text x="456" y="764" font-size="72" transform="rotate(-11 550 730)">09:28</text><path d="M200 768Q260 720 340 768M60 768Q90 748 120 768"/>
    <circle cx="22" cy="341" r="13"/><circle cx="71" cy="368" r="14"/><circle cx="60" cy="401" r="8"/><circle cx="88" cy="425" r="9"/><circle cx="40" cy="435" r="10"/><circle cx="282" cy="463" r="15"/><circle cx="292" cy="515" r="9"/><circle cx="122" cy="580" r="8"/><circle cx="341" cy="567" r="9"/><circle cx="358" cy="606" r="15"/><circle cx="398" cy="523" r="11"/><circle cx="393" cy="562" r="8"/><circle cx="546" cy="467" r="11"/><circle cx="579" cy="510" r="17"/><circle cx="576" cy="584" r="7"/><circle cx="553" cy="632" r="14"/><circle cx="460" cy="656" r="8"/><circle cx="319" cy="690" r="9"/><circle cx="265" cy="698" r="14"/><circle cx="221" cy="715" r="12"/><circle cx="184" cy="719" r="11"/><circle cx="178" cy="671" r="8"/><circle cx="170" cy="751" r="9"/><circle cx="677" cy="658" r="12"/><circle cx="686" cy="713" r="7"/><circle cx="684" cy="758" r="7"/><circle cx="721" cy="755" r="10"/><circle cx="879" cy="49" r="6"/><circle cx="858" cy="6" r="12"/>
  </g>
</svg>

<svg class="sprite" aria-hidden="true">
  <defs>
    <symbol id="checks" viewBox="0 0 26 18"><path d="M1 9 7 15.500 18 2M10.500 13.500 12.500 15.500 25 2"/></symbol>
    <linearGradient id="skin" x1="0" y1="0" x2=".4" y2="1"><stop offset="0" stop-color="#ffcb32"/><stop offset=".5" stop-color="#ffd448"/><stop offset="1" stop-color="#f8a94c"/></linearGradient>
    <symbol id="handshake" viewBox="0 0 152 120">
      <path fill="url(#skin)" d="M28 2 Q22 0 18 6L1 32Q0 37 5 40L18 48Q22 60 21 72Q17 82 25 87Q24 97 36 98Q38 108 50 107Q55 117 65 115Q72 122 82 116Q86 108 80 104L92 112Q101 117 105 108Q118 114 122 101Q135 102 134 88Q137 80 130 72L137 48 150 39Q153 35 149 29L134 5Q130 0 125 4L110 17Q96 22 83 18Q68 15 57 21L42 17Z"/>
      <path fill="#ffdf70" d="M28 5 41 17 22 46 5 36ZM127 6 146 34 134 45 113 18Z"/>
      <path fill="none" stroke="#e88925" stroke-width="4" stroke-linecap="round" stroke-linejoin="round" d="M41 18 20 47M111 18 136 46M83 18Q70 20 55 34Q47 44 60 46Q74 44 82 36Q94 42 102 50L130 72M92 66 118 91M79 78 104 103M68 89 83 106M24 86 34 70Q44 68 43 78L34 96M43 84Q55 76 56 87L48 105M58 93Q69 88 68 98L62 114"/>
      <path fill="none" stroke="#ffe889" stroke-width="4" stroke-linecap="round" d="M94 60 123 84M80 70 110 98M65 28 80 24"/>
    </symbol>
    <symbol id="question" viewBox="0 0 70 118"><path fill="none" stroke="#f21d1b" stroke-width="19" stroke-linecap="round" stroke-linejoin="round" d="M11 27Q16 10 35 10Q59 11 59 31Q58 43 46 51Q35 59 34 74"/><circle cx="34" cy="103" r="14" fill="#f21d1b"/><path fill="none" stroke="#ff6957" stroke-width="4" stroke-linecap="round" d="M14 15Q22 5 40 6M26 96Q31 91 37 93"/></symbol>
  </defs>
</svg>

<main class="chat">
  <article class="bubble sent"><p class="text">Diz 2 números</p><span class="meta"><time>19:36</time><svg class="checks" role="img" aria-label="Entregue"><use href="#checks"/></svg></span></article>
  <article class="bubble received tail"><h2 class="name">Miranda</h2><div class="row"><p class="text">15,18?</p><span class="meta"><time>19:36</time></span></div></article>
  <article class="bubble sent tail stacked"><p class="text">15 likes e 18 retweets e crias Twitter</p><span class="meta"><time>19:36</time><svg class="checks" role="img" aria-label="Entregue"><use href="#checks"/></svg></span></article>
  <article class="bubble received tail"><h2 class="name">Miranda</h2><div class="row"><p class="text">Desconheço o que é isso</p><span class="meta"><time>19:37</time></span></div></article>
  <article class="bubble sent tail flowing"><p class="text">Se esta conversa tiver 15 likes e 18 retweets crias Twitter, não é assim tão difícil de perceber <span class="meta"><time>19:38</time><svg class="checks" role="img" aria-label="Entregue"><use href="#checks"/></svg></span></p></article>
  <article class="bubble received tail"><h2 class="name">Miranda</h2><div class="row"><p class="text">Estou a ver</p><span class="meta"><time>19:38</time></span></div></article>
  <article class="bubble sent tail"><p class="text">Fechado?</p><span class="meta"><time>19:39</time><svg class="checks" role="img" aria-label="Entregue"><use href="#checks"/></svg></span></article>
  <article class="bubble received tail"><h2 class="name">Miranda</h2><div class="row"><p class="text">Aberto</p><span class="meta"><time>19:39</time></span></div></article>
  <article class="bubble sent tail"><p class="text">Já me estás a foder a print</p><span class="meta"><time>19:39</time><svg class="checks" role="img" aria-label="Entregue"><use href="#checks"/></svg></span></article>
  <article class="bubble sent joined"><p class="text">150 likes, 180 retweets</p><span class="meta"><time>19:40</time><svg class="checks" role="img" aria-label="Entregue"><use href="#checks"/></svg></span></article>
  <article class="bubble sent joined"><p class="emojis"><svg class="hands" role="img" aria-label="Aperto de mão"><use href="#handshake"/></svg><svg class="question" role="img" aria-label="Ponto de interrogação"><use href="#question"/></svg></p><span class="meta"><time>19:40</time><svg class="checks" role="img" aria-label="Entregue"><use href="#checks"/></svg></span></article>
  <article class="bubble received tail"><h2 class="name">Miranda</h2><div class="row"><p class="big-emoji"><svg class="hands-large" role="img" aria-label="Aperto de mão"><use href="#handshake"/></svg></p><span class="meta"><time>19:40</time></span></div></article>
</main>
<div class="scroll-thumb"></div>
</body>
</html>
```
FILE: styles.css
```css
* { box-sizing: border-box; }

body {
  margin: 0;
  height: 100vh;
  position: relative;
  overflow: hidden;
  background: #04111f;
  color: #fff;
  font-family: Roboto, "Liberation Sans", sans-serif;
}

.wallpaper {
  position: absolute;
  inset: 0;
  width: 100%;
  height: 100%;
  fill: none;
  stroke: #1b353f;
  stroke-width: 4;
  stroke-linejoin: round;
  stroke-linecap: round;
  font-family: "Liberation Sans", "Noto Sans CJK SC", sans-serif;
}

.wallpaper text { stroke-width: 3; }

.sprite {
  position: absolute;
  width: 0;
  height: 0;
}

.chat {
  position: relative;
  height: 100%;
  overflow-y: auto;
  scrollbar-width: none;
  display: flex;
  flex-direction: column;
  gap: 16px;
  padding: 2px 25px 16px;
  border-top: 2px solid #2b4052;
}

.bubble {
  position: relative;
  flex: none;
  max-width: 492px;
  border-radius: 17px;
}

.sent {
  align-self: flex-end;
  display: flex;
  align-items: flex-end;
  gap: 11px;
  padding: 10px 14px 11px 16px;
  color: #e9fffb;
  background: #16876c;
  box-shadow: inset 0 0 20px #1b957a, 0 1px 1px #020b14;
}

.received {
  align-self: flex-start;
  padding: 6px 13px 11px 15px;
  background: #2d4251;
  box-shadow: inset 0 0 14px #324858, 0 1px 1px #020b14;
}

.row {
  display: flex;
  align-items: flex-end;
  gap: 22px;
}

.tail.sent { border-top-right-radius: 0; }
.tail.received { border-top-left-radius: 0; }

.tail::before {
  content: "";
  position: absolute;
  top: 0;
  width: 12px;
  height: 16px;
}

.tail.sent::before {
  left: calc(100% - 1px);
  background: #1b9378;
  clip-path: polygon(0 0, 88% 0, 100% 12%, 8% 100%, 0 100%);
}

.tail.received::before {
  right: calc(100% - 1px);
  background: #324757;
  clip-path: polygon(12% 0, 100% 0, 100% 100%, 92% 100%, 0 12%);
}

.joined { margin-top: -12px; }

.stacked {
  flex-direction: column;
  padding-bottom: 7px;
}

.stacked .text { margin-right: 4px; }
.stacked .meta { margin-bottom: 0; }

.flowing { display: block; }
.flowing .meta { float: right; margin: 14px 0 -6px; height: 20px; }

.text, .emojis, .big-emoji { margin: 0; }

.text {
  font-size: 25px;
  line-height: 29px;
}

.name {
  margin: 0;
  font-size: 22px;
  font-weight: 500;
  line-height: 30px;
  padding-bottom: 1px;
  color: #70c8ff;
}

.meta {
  display: flex;
  align-items: center;
  gap: 7px;
  font-size: 18px;
  line-height: 20px;
  margin-bottom: -5px;
  color: #a8f8dc;
}

.received .meta { color: #b8c7d3; }

.checks {
  width: 25px;
  height: 17px;
  margin-bottom: 3px;
  fill: none;
  stroke: #a8f8dc;
  stroke-width: 2;
}

.emojis {
  display: flex;
  align-items: center;
  gap: 14px;
  height: 57px;
  margin-right: 12px;
}

.hands { width: 46px; height: 37px; }
.question { width: 24px; height: 40px; }

.big-emoji {
  display: flex;
  align-items: center;
  height: 65px;
  margin-right: 3px;
}

.hands-large { width: 51px; height: 41px; }

.scroll-thumb {
  position: absolute;
  right: 0;
  top: 75%;
  bottom: 0;
  width: 6px;
  background: #647b8a;
}
```
